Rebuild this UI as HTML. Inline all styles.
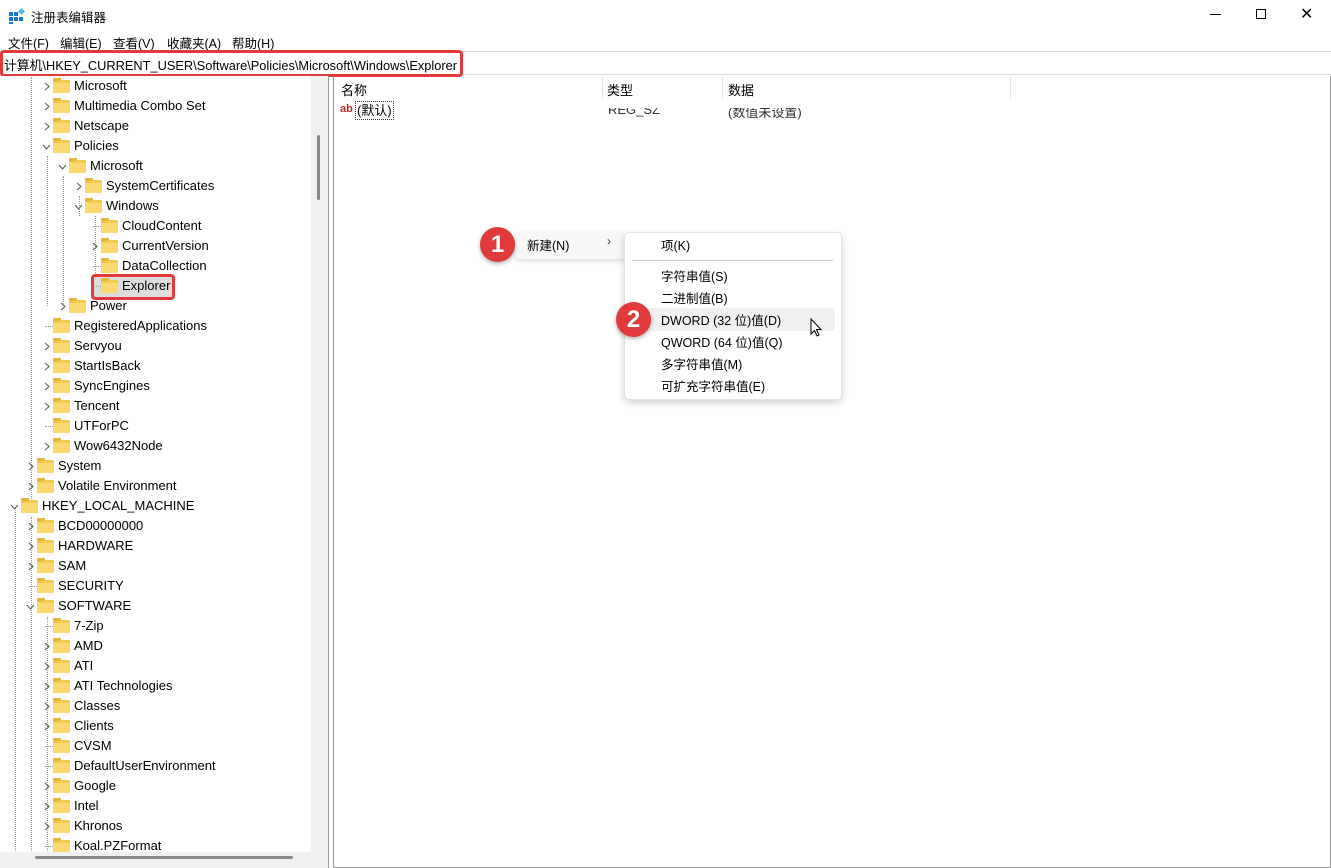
<!DOCTYPE html>
<html><head><meta charset="utf-8"><style>
*{margin:0;padding:0;box-sizing:border-box}
html,body{width:1331px;height:868px;overflow:hidden}
body{background:#fff;font-family:"Liberation Sans","Noto Sans CJK SC",sans-serif;font-size:13px;color:#000;position:relative}
.a{position:absolute;white-space:nowrap}
.row{position:absolute;height:20px;line-height:20px;white-space:nowrap}
.fd{position:absolute;width:17px;height:13px;top:4px;background:#f4c94f;border-radius:1px}
.fd:before{content:"";position:absolute;left:0;top:-2px;width:8px;height:3px;background:#e8b53a;border-radius:1px 1px 0 0}
.fd:after{content:"";position:absolute;left:0;top:3px;width:17px;height:10px;background:#fbd870;border-radius:1px}
.ar{position:absolute;top:0;color:#555;font-size:12px}
.mi{position:absolute;left:661px;font-size:12.5px}
.mn{position:absolute;top:33px;font-size:12.5px}
</style></head><body>
<svg class="a" style="left:9px;top:8px" width="16" height="16"><rect x="0" y="4" width="4" height="4" fill="#1a78d2"/><rect x="5" y="4" width="4" height="4" fill="#1a78d2"/><rect x="0" y="9" width="4" height="4" fill="#1a78d2"/><rect x="5" y="9" width="4" height="4" fill="#1a78d2"/><rect x="10" y="9" width="4" height="4" fill="#1a78d2"/><rect x="0" y="14" width="4" height="2" fill="#1a78d2"/><rect x="10" y="1" width="5" height="5" fill="#5fb3f0" transform="rotate(45 12.5 3.5)"/></svg>
<div class="a" style="left:31px;top:7px;font-size:12.5px">注册表编辑器</div>
<div class="a" style="left:1210px;top:14px;width:11px;height:1px;background:#000"></div>
<div class="a" style="left:1256px;top:9px;width:10px;height:10px;border:1px solid #000"></div>
<div class="a" style="left:1300px;top:4px;font-size:16px">✕</div>
<div class="mn" style="left:8px">文件(F)</div>
<div class="mn" style="left:60px">编辑(E)</div>
<div class="mn" style="left:113px">查看(V)</div>
<div class="mn" style="left:167px">收藏夹(A)</div>
<div class="mn" style="left:232px">帮助(H)</div>
<div class="a" style="left:0;top:51px;width:1331px;height:24px;border-top:1px solid #ddd;border-bottom:1px solid #ddd"></div>
<div class="a" style="left:0;top:50px;width:463px;height:27px;border:3px solid #e03a3a;border-radius:4px"></div>
<div class="a" style="left:4px;top:55px;font-size:12.8px">计算机\HKEY_CURRENT_USER\Software\Policies\Microsoft\Windows\Explorer</div>
<div class="a" style="left:0;top:76px;width:329px;height:792px;background:#f0f0f0;border-right:1px solid #999"></div>
<div class="a" style="left:0;top:76px;width:311px;height:776px;background:#fff;overflow:hidden">
<div style="position:absolute;left:0;top:-75px;width:311px;height:860px">
<div class="a" style="left:31px;top:76px;height:430px;border-left:1px dotted #999"></div>
<div class="a" style="left:15px;top:506px;height:350px;border-left:1px dotted #999"></div>
<div class="a" style="left:31px;top:516px;height:340px;border-left:1px dotted #999"></div>
<div class="a" style="left:47px;top:616px;height:240px;border-left:1px dotted #999"></div>
<div class="a" style="left:47px;top:155px;height:150px;border-left:1px dotted #999"></div>
<div class="a" style="left:63px;top:175px;height:130px;border-left:1px dotted #999"></div>
<div class="a" style="left:79px;top:195px;height:20px;border-left:1px dotted #999"></div>
<div class="a" style="left:95px;top:215px;height:75px;border-left:1px dotted #999"></div>
<div class="a" style="left:91px;top:273px;width:84px;height:26px;border:3px solid #e03a3a;border-radius:4px;background:#ddd"></div>
<div id="rows"></div>
</div></div>
<div class="a" style="left:317px;top:135px;width:3px;height:65px;background:#888;border-radius:2px"></div>
<div class="a" style="left:35px;top:856px;width:258px;height:3px;background:#888;border-radius:2px"></div>
<div class="a" style="left:333px;top:76px;width:998px;height:792px;border-left:1px solid #999;border-right:1px solid #999;border-bottom:1px solid #999"></div>
<div class="a" style="left:341px;top:80px">名称</div>
<div class="a" style="left:607px;top:80px">类型</div>
<div class="a" style="left:728px;top:80px">数据</div>
<div class="a" style="left:602px;top:77px;width:1px;height:22px;background:#e5e5e5"></div>
<div class="a" style="left:722px;top:77px;width:1px;height:22px;background:#e5e5e5"></div>
<div class="a" style="left:1010px;top:77px;width:1px;height:22px;background:#e5e5e5"></div>
<div class="a" style="left:340px;top:103px;color:#c62828;font-weight:bold;font-size:11px">ab</div>
<div class="a" style="left:355px;top:101px;border:1px dotted #333;padding:0 1px;height:19px;line-height:17px">(默认)</div>
<div class="a" style="left:608px;top:102px;color:#333;clip-path:inset(6px 0 0 0)">REG_SZ</div>
<div class="a" style="left:728px;top:102px;color:#333;clip-path:inset(6px 0 0 0)">(数值未设置)</div>
<div class="a" style="left:515px;top:232px;width:112px;height:27px;background:#f7f7f7;border-radius:5px;box-shadow:0 2px 6px rgba(0,0,0,.15)"></div>
<div class="a" style="left:527px;top:235px;font-size:12.5px">新建(N)</div>
<div class="a" style="left:607px;top:234px;font-size:12px;color:#333">›</div>
<div class="a" style="left:624px;top:232px;width:218px;height:168px;background:#fff;border:1px solid #e3e3e3;border-radius:5px;box-shadow:0 3px 8px rgba(0,0,0,.18)"></div>
<div class="a" style="left:632px;top:260px;width:201px;height:1px;background:#ccc"></div>
<div class="a" style="left:630px;top:308px;width:205px;height:23px;background:#f0f0f0;border-radius:4px"></div>
<div class="mi" style="top:235px">项(K)</div>
<div class="mi" style="top:266px">字符串值(S)</div>
<div class="mi" style="top:288px">二进制值(B)</div>
<div class="mi" style="top:310px">DWORD (32 位)值(D)</div>
<div class="mi" style="top:332px">QWORD (64 位)值(Q)</div>
<div class="mi" style="top:354px">多字符串值(M)</div>
<div class="mi" style="top:376px">可扩充字符串值(E)</div>
<svg class="a" style="left:810px;top:318px" width="14" height="22"><path d="M1 1 L1 16 L4.5 12.5 L7 18 L9 17 L6.5 11.5 L11 11.5 Z" fill="#fff" stroke="#000" stroke-width="1"/></svg>
<div class="a" style="left:480px;top:227px;width:35px;height:35px;border-radius:50%;background:#e03a3a;color:#fff;font-size:24px;font-weight:bold;text-align:center;line-height:35px;box-shadow:0 2px 4px rgba(0,0,0,.3)">1</div>
<div class="a" style="left:616px;top:302px;width:35px;height:35px;border-radius:50%;background:#e03a3a;color:#fff;font-size:24px;font-weight:bold;text-align:center;line-height:35px;box-shadow:0 2px 4px rgba(0,0,0,.3)">2</div>
<script>
var R=[["Microsoft",3,">"],["Multimedia Combo Set",3,">"],["Netscape",3,">"],["Policies",3,"v"],["Microsoft",4,"v"],["SystemCertificates",5,">"],["Windows",5,"v"],["CloudContent",6,""],["CurrentVersion",6,">"],["DataCollection",6,""],["Explorer",6,""],["Power",4,">"],["RegisteredApplications",3,""],["Servyou",3,">"],["StartIsBack",3,">"],["SyncEngines",3,">"],["Tencent",3,">"],["UTForPC",3,""],["Wow6432Node",3,">"],["System",2,">"],["Volatile Environment",2,">"],["HKEY_LOCAL_MACHINE",1,"v"],["BCD00000000",2,">"],["HARDWARE",2,">"],["SAM",2,">"],["SECURITY",2,""],["SOFTWARE",2,"v"],["7-Zip",3,""],["AMD",3,">"],["ATI",3,">"],["ATI Technologies",3,">"],["Classes",3,">"],["Clients",3,">"],["CVSM",3,""],["DefaultUserEnvironment",3,""],["Google",3,">"],["Intel",3,">"],["Khronos",3,">"],["Koal.PZFormat",3,""]];
var h="";R.forEach(function(r,i){var t=75+20*i,tx=42+16*(r[1]-1),ax=tx-31;
var ar=r[2]==">"?'<svg class="ar" style="left:'+ax+'px;top:6px" width="8" height="9"><path d="M2 1 L6 4.5 L2 8" fill="none" stroke="#555"/></svg>':r[2]=="v"?'<svg class="ar" style="left:'+(ax-1)+'px;top:7px" width="9" height="8"><path d="M1 2 L4.5 6 L8 2" fill="none" stroke="#555"/></svg>':'<div class="a" style="left:'+(ax+2)+'px;top:10px;width:8px;border-top:1px dotted #999"></div>';
h+='<div class="row" style="left:0;top:'+t+'px;width:311px">'+ar+'<div class="fd" style="left:'+(tx-21)+'px"></div><div class="a" style="left:'+tx+'px;top:0">'+r[0]+'</div></div>';});
document.getElementById("rows").innerHTML=h;
</script>
</body></html>
